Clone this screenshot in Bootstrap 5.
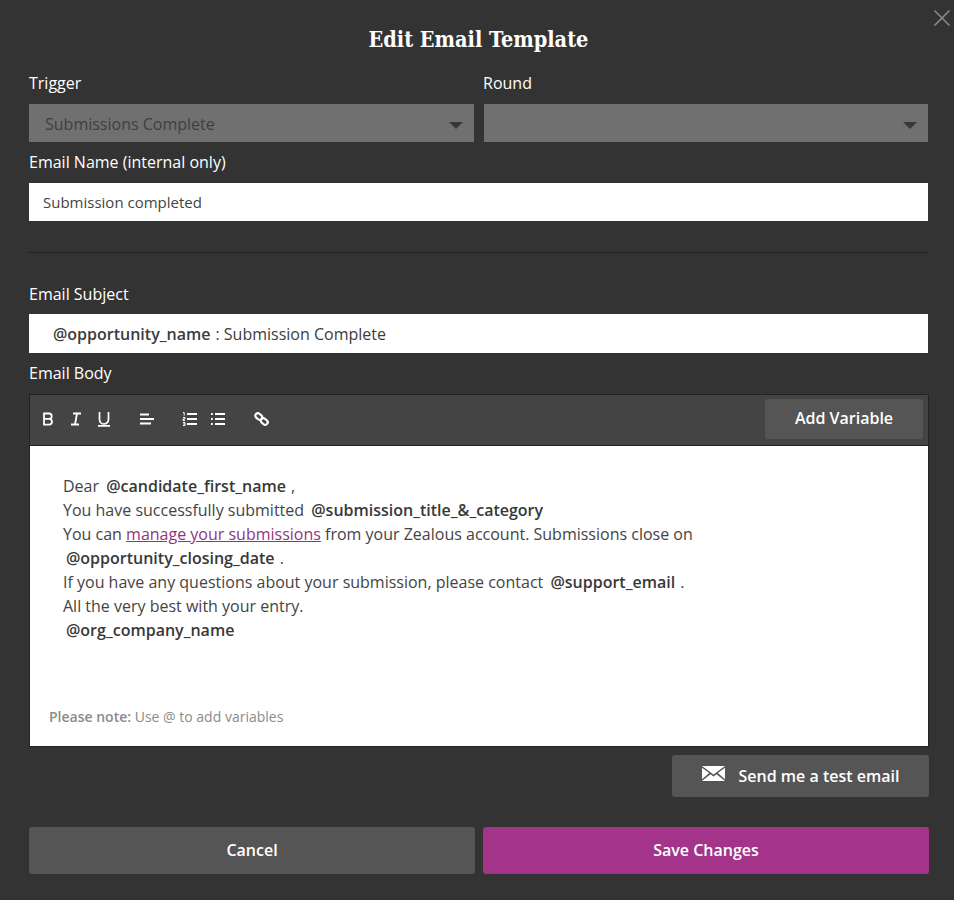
<!DOCTYPE html>
<html lang="en">
<head>
  <meta charset="UTF-8">
  <meta name="viewport" content="width=device-width, initial-scale=1">
  <title>Edit Email Template</title>
  <link href="https://cdn.jsdelivr.net/npm/bootstrap@5.3.2/dist/css/bootstrap.min.css" rel="stylesheet">
  <style>
    body { background: #333; font-family: "Open Sans", "Liberation Sans", sans-serif; font-size: 16px; color: #fff; height: 900px; overflow: hidden; }
    .tpl-wrap { padding: 20px 26px 0 29px; position: relative; }
    .tpl-title { font-family: "DejaVu Serif Condensed", "DejaVu Serif", "Liberation Serif", serif; font-stretch: condensed; font-weight: 700; font-size: 21.5px; line-height: 38px; padding-top: 1px; margin: 0 0 13px; text-align: center; color: #fff; }
    .tpl-close { position: absolute; top: 9px; right: 3px; width: 18px; height: 18px; padding: 0; border: 0; background: none; line-height: 0; }
    .tpl-label { display: block; line-height: 22px; margin: 0 0 10px; color: #fff; }
    .tpl-label.tpl-tight { margin-bottom: 9px; }
    .tpl-label.tpl-outdent { margin-left: -1px; }
    .tpl-select.form-select { height: 38px; border: 0; border-radius: 0; padding: 2px 40px 0 16px; font-size: 16px; background-color: #707070; color: #3f3f3f; opacity: 1; background-size: 14px 7px; background-position: right 11px top 18px;
      background-image: url("data:image/svg+xml,%3csvg xmlns='http://www.w3.org/2000/svg' viewBox='0 0 14 7'%3e%3cpath fill='%23383838' d='M0 0h14L7 7z'/%3e%3c/svg%3e"); }
    .tpl-gap { column-gap: 10px; margin-bottom: 9px; }
    .tpl-gap > div { flex: 0 0 445px; }
    .tpl-gap > div + div { flex-basis: 444px; }
    .tpl-input.form-control { height: 38px; border: 0; border-radius: 0; padding: 0 14px; font-size: 15px; color: #444; background: #fff; }
    .tpl-rule { border: 0; border-top: 1px solid #1f1f1f; opacity: 1; margin: 31px 0 30px; }
    .tpl-subject { height: 39px; background: #fff; color: #3c3c3c; padding: 0 24px; display: flex; align-items: center; margin-bottom: 9px; }
    .tpl-subject b { margin-right: 5px; }
    .tpl-editor { border: 1px solid #232323; height: 353px; margin-right: -1px; display: flex; flex-direction: column; }
    .tpl-bar { height: 51px; background: #444; border-bottom: 1px solid #222; display: flex; align-items: center; padding: 0 5px 2px 10px; flex: none; }
    .tpl-tool { display: flex; width: 16px; height: 16px; margin-right: 12px; }
    .tpl-tool.tpl-sep { margin-right: 27px; }
    .tpl-add.btn { margin-left: auto; width: 158px; height: 40px; padding: 0 0 2px; background: #555; border: 0; border-radius: 3px; color: #fff; font-weight: 600; font-size: 16px; }
    .tpl-body { flex: 1; background: #fff; color: #444; padding: 28px 33px 0 33px; line-height: 24px; position: relative; }
    .tpl-body b { font-weight: 600; color: #383838; margin: 0 1px 0 3px; }
    .tpl-body a { color: #8f3580; }
    .tpl-note { position: absolute; left: 19px; top: 260px; font-size: 14px; color: #8b8b8b; line-height: 22px; }
    .tpl-note strong { font-weight: 600; }
    .tpl-test.btn { display: flex; align-items: center; justify-content: center; width: 257px; height: 42px; margin: 8px -1px 30px auto; background: #555; border: 0; border-radius: 3px; color: #fff; font-weight: 600; font-size: 16px; padding: 0; }
    .tpl-test svg { margin-right: 14px; margin-top: -5px; }
    .tpl-actions { column-gap: 8px; }
    .tpl-actions .btn { flex: 0 0 446px; height: 47px; padding: 0 0 2px; border: 0; border-radius: 3px; color: #fff; font-weight: 600; font-size: 16px; }
    .tpl-cancel { background: #555; }
    .tpl-save { background: #a3348a; }
  </style>
</head>
<body>
  <div class="tpl-wrap">
    <button class="tpl-close" type="button" aria-label="Close">
      <svg width="18" height="18" viewBox="0 0 18 18"><path d="M1.500 1.500l15 15M16.500 1.500l-15 15" stroke="#8a8a8a" stroke-width="1.600" fill="none"/></svg>
    </button>
    <h1 class="tpl-title">Edit Email Template</h1>

    <div class="d-flex tpl-gap">
      <div>
        <label class="tpl-label">Trigger</label>
        <select class="form-select tpl-select" disabled><option>Submissions Complete</option></select>
      </div>
      <div>
        <label class="tpl-label tpl-outdent">Round</label>
        <select class="form-select tpl-select" disabled><option></option></select>
      </div>
    </div>

    <label class="tpl-label">Email Name (internal only)</label>
    <input class="form-control tpl-input" type="text" value="Submission completed">

    <hr class="tpl-rule">

    <label class="tpl-label tpl-tight">Email Subject</label>
    <div class="tpl-subject"><b class="fw-semibold">@opportunity_name</b>: Submission Complete</div>

    <label class="tpl-label">Email Body</label>
    <div class="tpl-editor">
      <div class="tpl-bar">
        <span class="tpl-tool"><svg width="16" height="16" viewBox="0 0 16 16" fill="none" stroke="#fff" stroke-width="1.800"><path d="M4 2.500h5a2.600 2.600 0 0 1 0 5.400H4zM4 7.900h5.600a2.900 2.900 0 0 1 0 5.700H4z"/></svg></span>
        <span class="tpl-tool"><svg width="16" height="16" viewBox="0 0 16 16" fill="none" stroke="#fff" stroke-width="1.800"><path d="M5 2.500h8M3 13.500h8M9 2.500l-2 11"/></svg></span>
        <span class="tpl-tool tpl-sep"><svg width="16" height="16" viewBox="0 0 16 16" fill="none" stroke="#fff" stroke-width="1.700"><path d="M3.500 1v7.500a4.500 4.500 0 0 0 9 0V1M2 14.800h12"/></svg></span>
        <span class="tpl-tool tpl-sep"><svg width="16" height="16" viewBox="0 0 16 16" fill="none" stroke="#fff" stroke-width="1.800"><path d="M1 3.500h9M1 8h14M1 12.500h11"/></svg></span>
        <span class="tpl-tool"><svg width="16" height="16" viewBox="0 0 16 16" fill="none" stroke="#fff"><path stroke-width="1.800" d="M5 3h10M5 8h10M5 13h10"/><path stroke-width="1" d="M1 1.500h1.200v3M1 6.500h2v1.500H1v1.500h2M1 11.500h2v3H1M1.200 13h1.800"/></svg></span>
        <span class="tpl-tool tpl-sep"><svg width="16" height="16" viewBox="0 0 16 16" fill="none" stroke="#fff" stroke-width="1.800"><path d="M5 3h10M5 8h10M5 13h10M1 3h1.800M1 8h1.800M1 13h1.800"/></svg></span>
        <span class="tpl-tool"><svg width="16" height="16" viewBox="0 0 16 16" fill="none" stroke="#fff" stroke-width="2.200"><rect x="2" y="3" width="7.500" height="5" rx="2.500" transform="rotate(40 5.750 5.500)"/><rect x="7.500" y="8" width="7.500" height="5" rx="2.500" transform="rotate(40 11.250 10.500)"/></svg></span>
        <button class="btn tpl-add" type="button">Add Variable</button>
      </div>
      <div class="tpl-body">
        Dear <b>@candidate_first_name</b> ,<br>
        You have successfully submitted <b>@submission_title_&amp;_category</b><br>
        You can <a href="#">manage your submissions</a> from your Zealous account. Submissions close on<br>
        <b>@opportunity_closing_date</b> .<br>
        If you have any questions about your submission, please contact <b>@support_email</b> .<br>
        All the very best with your entry.<br>
        <b>@org_company_name</b>
        <div class="tpl-note"><strong>Please note:</strong> Use @ to add variables</div>
      </div>
    </div>

    <button class="btn tpl-test" type="button">
      <svg width="23" height="15" viewBox="0 0 23 15" fill="#fff"><path d="M0 0h23L11.500 8.500zM0 1.800v11.500l7.200-6.200zM23 1.800v11.500l-7.200-6.200zM8.500 8.200l3 2.200 3-2.200L23 15H0z"/></svg>
      Send me a test email
    </button>

    <div class="d-flex tpl-actions">
      <button class="btn tpl-cancel" type="button">Cancel</button>
      <button class="btn tpl-save" type="button">Save Changes</button>
    </div>
  </div>
  <script src="https://cdn.jsdelivr.net/npm/bootstrap@5.3.2/dist/js/bootstrap.bundle.min.js"></script>
</body>
</html>
